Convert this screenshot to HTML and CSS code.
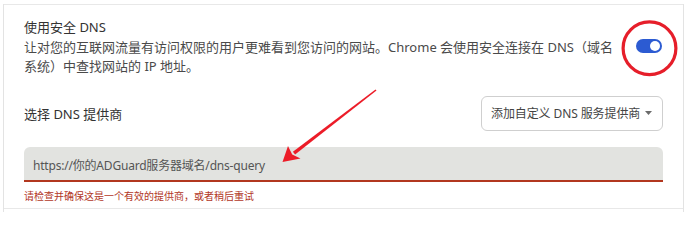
FILE: index.html
```html
<!DOCTYPE html>
<html lang="zh-CN">
<head>
<meta charset="utf-8">
<title>使用安全 DNS</title>
<link rel="stylesheet" href="styles.css">
</head>
<body>
<div class="card">
  <div class="section">
    <div class="row-top">
      <div class="text">
        <div class="title">使用安全 DNS</div>
        <div class="desc">让对您的互联网流量有访问权限的用户更难看到您访问的网站。Chrome 会使用安全连接在 DNS（域名系统）中查找网站的 IP 地址。</div>
      </div>
      <span class="toggle"><span class="knob"></span></span>
    </div>
    <div class="row-provider">
      <div class="label">选择 DNS 提供商</div>
      <div class="select">
        <span>添加自定义 DNS 服务提供商</span>
        <svg class="caret" width="7" height="4" viewBox="0 0 7 4"><path d="M0 0H7L3.5 4Z" fill="#6b6b6b"/></svg>
      </div>
    </div>
    <div class="input">https://你的ADGuard服务器域名/dns-query</div>
    <div class="error">请检查并确保这是一个有效的提供商，或者稍后重试</div>
  </div>
</div>
<svg class="annot" width="687" height="212" viewBox="0 0 687 212">
  <circle cx="649.5" cy="48.3" r="26.4" fill="none" stroke="#e61e2a" stroke-width="3.2"/>
  <polygon points="376.5,90.6 375.5,89.4 292.9,151.8 295.1,154.6" fill="#ec1c28"/>
  <polygon points="282.5,162 288,146 292.2,154.5 300.5,158.5" fill="#ec1c28"/>
</svg>
</body>
</html>
```
FILE: styles.css
```css
html, body {
  margin: 0;
  padding: 0;
  background: #ffffff;
}
body {
  width: 687px;
  height: 212px;
  overflow: hidden;
  position: relative;
  font-family: "Noto Sans", "Noto Sans CJK SC", sans-serif;
}
.card {
  margin-left: 3px;
  width: 679px;
  height: 212px;
  border-left: 1px solid #e3e3e3;
  border-right: 1px solid #e3e3e3;
}
.section {
  margin-top: 4px;
  height: 205px;
  border-top: 1px solid #e8e8e8;
  border-bottom: 1px solid #e8e8e8;
  padding: 13px 20px 0 20px;
  box-sizing: border-box;
}
.row-top {
  display: flex;
  align-items: center;
  justify-content: space-between;
}
.text {
  width: 590px;
  font-size: 13px;
  line-height: 19.5px;
}
.title {
  color: #333333;
}
.desc {
  color: #4a4a4a;
}
.toggle {
  width: 26px;
  height: 14px;
  border-radius: 7px;
  background: #2c5bd2;
  margin-right: 1px;
  margin-top: -2px;
  display: flex;
  align-items: center;
  justify-content: flex-end;
  padding-right: 2px;
  box-sizing: border-box;
}
.knob {
  width: 10px;
  height: 10px;
  border-radius: 50%;
  background: #ffffff;
}
.row-provider {
  margin-top: 19px;
  display: flex;
  align-items: center;
  justify-content: space-between;
}
.label {
  font-size: 13px;
  color: #333333;
}
.select {
  width: 182px;
  height: 35px;
  box-sizing: border-box;
  border: 1px solid #cfcfcf;
  border-radius: 6px;
  display: flex;
  align-items: center;
  justify-content: space-between;
  padding: 0 10px 0 9px;
  font-size: 12px;
  letter-spacing: -0.1px;
  color: #444444;
}
.caret {
  display: block;
}
.input {
  margin-top: 16px;
  background: #e2e3e0;
  border-radius: 6px 6px 0 0;
  border-bottom: 2px solid #b2371f;
  padding: 9px 10px 4px 9px;
  line-height: 20px;
  font-size: 12px;
  letter-spacing: -0.2px;
  color: #555555;
}
.error {
  margin-top: 7px;
  font-size: 10px;
  line-height: 14px;
  color: #b2371f;
}
.annot {
  position: absolute;
  left: 0;
  top: 0;
}
```
